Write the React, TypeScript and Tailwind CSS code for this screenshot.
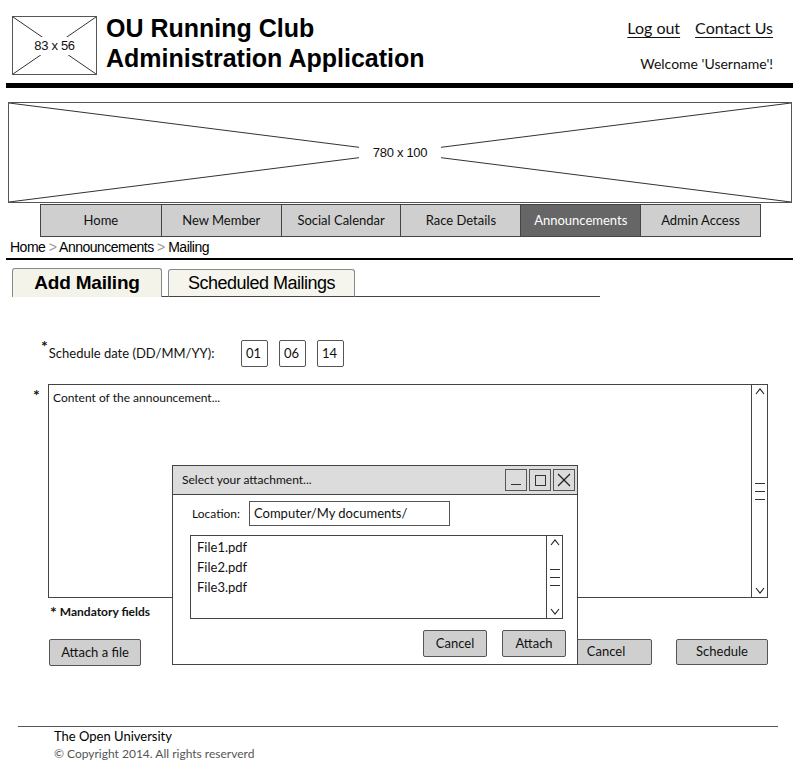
import React from 'react';

const HAND = "font-['Lato','Open_Sans',sans-serif]";
const NARROW = "font-['Liberation_Sans_Narrow','Liberation_Sans',Arial,sans-serif]";

const NAV = ['Home', 'New Member', 'Social Calendar', 'Race Details', 'Announcements', 'Admin Access'];

function Placeholder({ label, className, gap }: { label: string; className: string; gap: string }) {
  return (
    <div className={`relative border border-[#555] bg-white ${className}`}>
      <svg className="absolute inset-0 h-full w-full" viewBox="0 0 100 100" preserveAspectRatio="none">
        <line x1="0" y1="0" x2="100" y2="100" stroke="#333" strokeWidth="1" vectorEffect="non-scaling-stroke" />
        <line x1="100" y1="0" x2="0" y2="100" stroke="#333" strokeWidth="1" vectorEffect="non-scaling-stroke" />
      </svg>
      <div className="relative flex h-full items-center justify-center">
        <span className={`bg-white text-[13px] leading-[18px] tracking-[-0.3px] text-[#111] ${NARROW} ${gap}`}>{label}</span>
      </div>
    </div>
  );
}

function Chevron({ up }: { up?: boolean }) {
  return (
    <svg width="10" height="7" viewBox="0 0 10 7">
      <polyline
        points={up ? '1,6 5,1 9,6' : '1,1 5,6 9,1'}
        fill="none"
        stroke="#222"
        strokeWidth="1.1"
      />
    </svg>
  );
}

function ScrollBar() {
  return (
    <div className="flex w-[16px] flex-col items-center justify-between border-l border-[#444] py-[3px]">
      <Chevron up />
      <div className="flex flex-col gap-[7px]">
        <div className="h-[1px] w-[10px] bg-[#333]" />
        <div className="h-[1px] w-[10px] bg-[#333]" />
        <div className="h-[1px] w-[10px] bg-[#333]" />
      </div>
      <Chevron />
    </div>
  );
}

function Btn({ children, className }: { children: React.ReactNode; className: string }) {
  return (
    <div
      className={`flex items-center justify-center rounded-[2px] border-[1.5px] border-[#555] bg-[#cfcfcf] text-[13px] text-[#111] ${HAND} ${className}`}
    >
      {children}
    </div>
  );
}

function DateBox({ value }: { value: string }) {
  return (
    <div className="flex h-[27px] w-[27px] items-center rounded-[2px] border-[1.5px] border-[#555] pl-[4px] text-[13px] text-[#111]">
      {value}
    </div>
  );
}

function AttachDialog() {
  return (
    <div className={`absolute left-[172px] top-[465px] h-[200px] w-[406px] border-[1.5px] border-[#444] bg-white ${HAND}`}>
      <div className="flex h-[29px] items-center justify-between border-b border-[#444] bg-[#dcdcdc] pl-[9px] pr-[2px]">
        <span className="text-[12px] text-[#111]">Select your attachment...</span>
        <div className="flex gap-[2px]">
          <div className="flex h-[22px] w-[22px] items-end justify-center border-[1.5px] border-[#555] pb-[5px]">
            <div className="h-[1.5px] w-[10px] bg-[#333]" />
          </div>
          <div className="flex h-[22px] w-[22px] items-center justify-center border-[1.5px] border-[#555]">
            <div className="h-[11px] w-[11px] border-[1.5px] border-[#333]" />
          </div>
          <div className="flex h-[22px] w-[22px] items-center justify-center border-[1.5px] border-[#555]">
            <svg width="14" height="14" viewBox="0 0 14 14">
              <line x1="1" y1="1" x2="13" y2="13" stroke="#222" strokeWidth="1.2" />
              <line x1="13" y1="1" x2="1" y2="13" stroke="#222" strokeWidth="1.2" />
            </svg>
          </div>
        </div>
      </div>
      <div className="mt-[6px] flex items-center pl-[19px]">
        <span className="w-[57px] text-[12px] text-[#111]">Location:</span>
        <div className="flex h-[25px] w-[201px] items-center border-[1.5px] border-[#555] pl-[4px] text-[13px] text-[#111]">
          Computer/My documents/
        </div>
      </div>
      <div className="ml-[17px] mt-[9px] flex h-[84px] w-[373px] border-[1.5px] border-[#444]">
        <div className="flex-1 pl-[6px] pt-[1px] text-[13px] leading-[20px] text-[#111]">
          <div>File1.pdf</div>
          <div>File2.pdf</div>
          <div>File3.pdf</div>
        </div>
        <ScrollBar />
      </div>
      <div className="mr-[11px] mt-[11px] flex justify-end gap-[15px]">
        <Btn className="h-[27px] w-[64px]">Cancel</Btn>
        <Btn className="h-[27px] w-[64px]">Attach</Btn>
      </div>
    </div>
  );
}

export default function App() {
  return (
    <div className={`relative h-[770px] w-[800px] overflow-hidden bg-white text-[#111] ${HAND}`}>
      {/* header */}
      <div className="flex h-[83px]">
        <Placeholder label="83 x 56" gap="px-[2px]" className="ml-[12px] mt-[16px] h-[59px] w-[85px]" />
        <div className="ml-[9px] mt-[13px] font-['Liberation_Sans',Arial,sans-serif] text-[25px] font-bold leading-[30px] text-black">
          OU Running Club
          <br />
          Administration Application
        </div>
        <div className="ml-auto mr-[27px] flex flex-col items-end pt-[17px]">
          <div className="flex gap-[15px] text-[16px] leading-[22px]">
            <span className="underline underline-offset-[3px]">Log out</span>
            <span className="underline underline-offset-[3px]">Contact Us</span>
          </div>
          <div className="mt-[15px] text-[14px] leading-[20px]">Welcome 'Username'!</div>
        </div>
      </div>
      <div className="ml-[6px] h-[5px] w-[787px] bg-black" />

      {/* banner */}
      <Placeholder label="780 x 100" gap="px-[14px]" className="ml-[8px] mt-[14px] h-[101px] w-[784px]" />

      {/* navigation */}
      <div className="ml-[40px] mt-[1px] flex h-[33px] w-[721px] border border-[#444]">
        {NAV.map((item, i) => (
          <div
            key={item}
            className={`flex w-[120px] items-center justify-center text-[13px] ${i > 0 ? 'border-l border-[#444]' : ''} ${
              item === 'Announcements' ? 'bg-[#666] text-white' : 'bg-[#cfcfcf] text-[#111]'
            }`}
          >
            {item}
          </div>
        ))}
      </div>

      {/* breadcrumb */}
      <div className={`ml-[10px] h-[21px] text-[14px] leading-[21px] tracking-[-0.5px] text-black ${NARROW}`}>
        Home <span className="text-[#999]">&gt;</span> Announcements <span className="text-[#999]">&gt;</span> Mailing
      </div>
      <div className="ml-[6px] h-[2px] w-[787px] bg-black" />

      {/* tabs */}
      <div className={`ml-[12px] mt-[8px] flex h-[29px] w-[588px] items-end ${NARROW}`}>
        <div className="flex h-[29px] w-[150px] items-center justify-center rounded-t-[3px] border-x border-t border-[#888] bg-[#f3f3ea] text-[19px] font-bold tracking-[-0.2px] text-black">
          Add Mailing
        </div>
        <div className="h-[1px] w-[6px] bg-[#444]" />
        <div className="flex h-[28px] w-[187px] items-center justify-center rounded-t-[3px] border border-[#888] border-b-[#444] bg-[#f5f5ee] text-[18px] tracking-[-0.5px] text-black">
          Scheduled Mailings
        </div>
        <div className="h-[1px] flex-1 bg-[#444]" />
      </div>

      {/* schedule date */}
      <div className="ml-[41px] mt-[43px] flex h-[27px] items-center">
        <div className="flex w-[200px] items-start">
          <span className="mt-[-6px] text-[16px] font-bold leading-[16px]">*</span>
          <span className="ml-[1px] text-[13px]">Schedule date (DD/MM/YY):</span>
        </div>
        <div className="flex gap-[11px]">
          <DateBox value="01" />
          <DateBox value="06" />
          <DateBox value="14" />
        </div>
      </div>

      {/* content */}
      <div className="ml-[33px] mt-[17px] flex">
        <span className="mt-[3px] w-[15px] text-[16px] font-bold leading-[16px]">*</span>
        <div className="flex h-[214px] w-[720px] border-[1.5px] border-[#444]">
          <div className="flex-1 pl-[4px] pt-[4px] text-[12px] leading-[18px]">Content of the announcement...</div>
          <ScrollBar />
        </div>
      </div>

      {/* mandatory */}
      <div className="ml-[50px] mt-[5px] flex h-[18px] items-center gap-[3px]">
        <span className="text-[16px] font-bold leading-[16px]">*</span>
        <span className="text-[12px] font-bold">Mandatory fields</span>
      </div>

      {/* actions */}
      <div className="ml-[49px] mt-[18px] flex h-[27px] w-[719px]">
        <Btn className="h-[27px] w-[92px]">Attach a file</Btn>
        <div className="flex-1" />
        <Btn className="h-[26px] w-[92px]">Cancel</Btn>
        <Btn className="ml-[24px] h-[26px] w-[92px]">Schedule</Btn>
      </div>

      {/* footer */}
      <div className="ml-[18px] mt-[60px] h-[1px] w-[760px] bg-[#555]" />
      <div className="ml-[54px] mt-[1px] text-[13px] leading-[17px] text-black">The Open University</div>
      <div className="ml-[54px] text-[12px] leading-[17px] text-[#555]">© Copyright 2014. All rights reserverd</div>

      <AttachDialog />
    </div>
  );
}
